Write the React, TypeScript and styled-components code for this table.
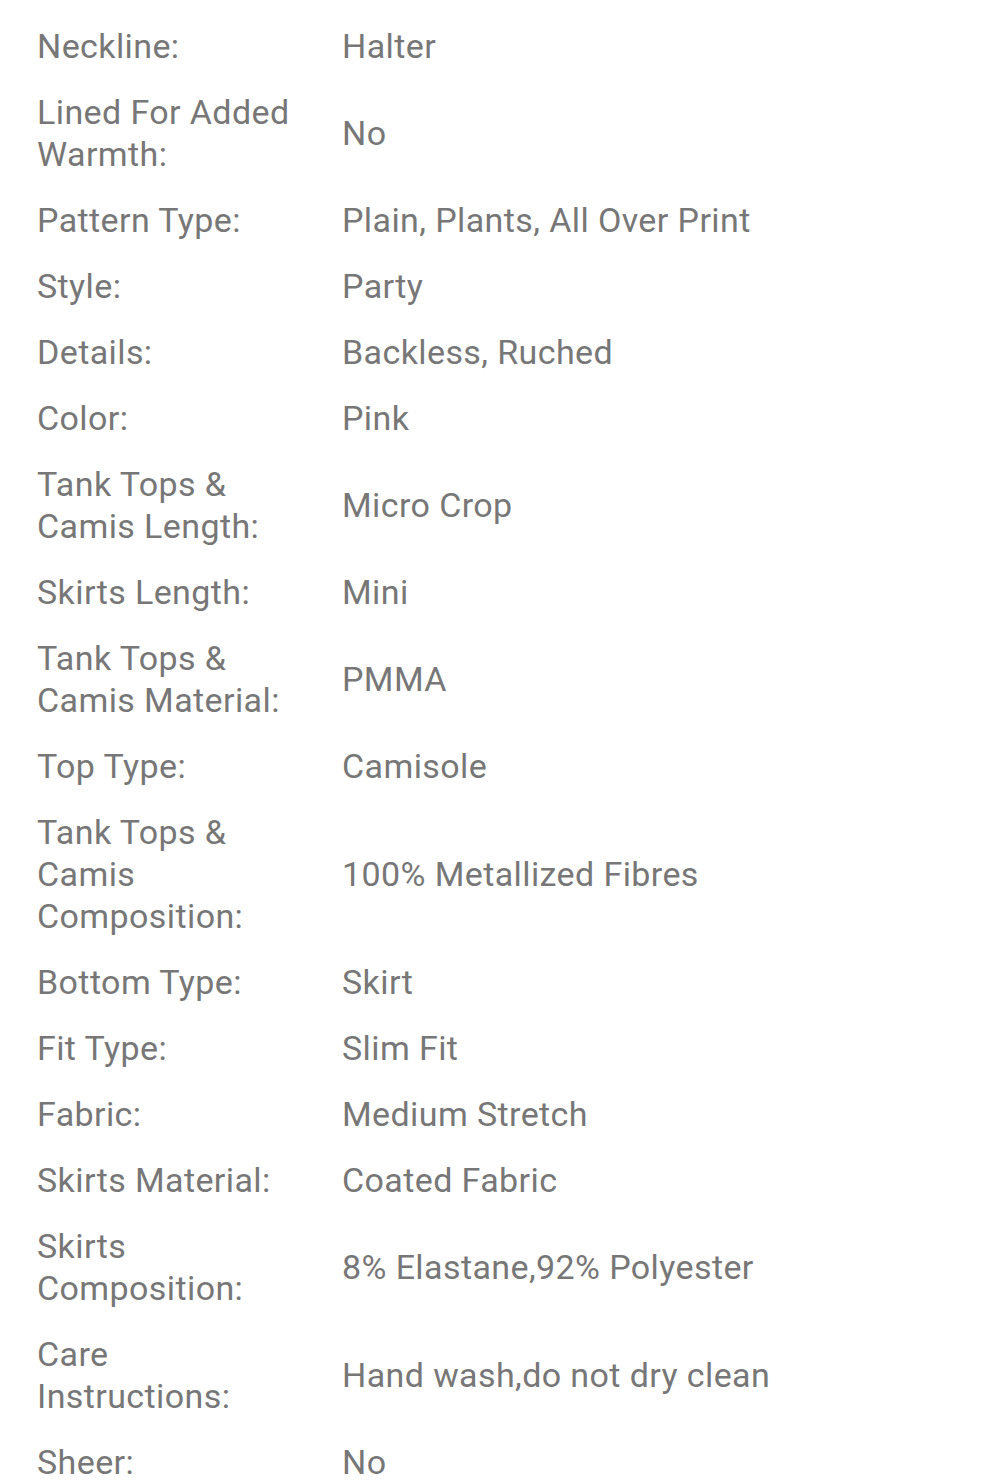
import React from 'react';
import styled, { createGlobalStyle } from 'styled-components';

const GlobalStyle = createGlobalStyle`
  body {
    margin: 0;
    background: #ffffff;
    font-family: Roboto, "Noto Sans", sans-serif;
  }
`;

const Table = styled.div`
  display: grid;
  grid-template-columns: 262px 1fr;
  column-gap: 43px;
  padding: 13px 20px 0 37px;
  color: #777777;
  font-size: 34px;
  line-height: 42px;
  letter-spacing: 0.4px;
`;

const Label = styled.div`
  padding: 12px 0;
`;

const Value = styled.div`
  display: flex;
  align-items: center;
  padding: 12px 0;
`;

const specs: [string, string][] = [
  ['Neckline:', 'Halter'],
  ['Lined For Added Warmth:', 'No'],
  ['Pattern Type:', 'Plain, Plants, All Over Print'],
  ['Style:', 'Party'],
  ['Details:', 'Backless, Ruched'],
  ['Color:', 'Pink'],
  ['Tank Tops & Camis Length:', 'Micro Crop'],
  ['Skirts Length:', 'Mini'],
  ['Tank Tops & Camis Material:', 'PMMA'],
  ['Top Type:', 'Camisole'],
  ['Tank Tops & Camis Composition:', '100% Metallized Fibres'],
  ['Bottom Type:', 'Skirt'],
  ['Fit Type:', 'Slim Fit'],
  ['Fabric:', 'Medium Stretch'],
  ['Skirts Material:', 'Coated Fabric'],
  ['Skirts Composition:', '8% Elastane,92% Polyester'],
  ['Care Instructions:', 'Hand wash,do not dry clean'],
  ['Sheer:', 'No'],
];

function App() {
  return (
    <>
      <GlobalStyle />
      <Table>
        {specs.map(([label, value]) => (
          <React.Fragment key={label}>
            <Label>{label}</Label>
            <Value>{value}</Value>
          </React.Fragment>
        ))}
      </Table>
    </>
  );
}

export default App;
